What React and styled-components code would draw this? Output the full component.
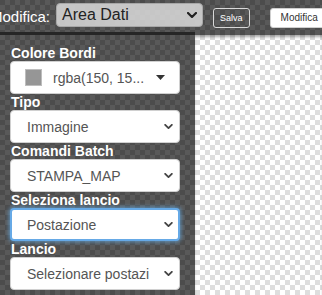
import React from "react";
import styled, { createGlobalStyle, css } from "styled-components";

const Global = createGlobalStyle`
  html, body { margin: 0; padding: 0; }
  body { font-family: "Liberation Sans", Arial, sans-serif; }
`;

const checker = (a, b) => css`
  background-color: ${a};
  background-image:
    linear-gradient(45deg, ${b} 25%, transparent 25%, transparent 75%, ${b} 75%),
    linear-gradient(45deg, ${b} 25%, transparent 25%, transparent 75%, ${b} 75%);
  background-size: 10px 10px;
  background-position: 0 0, 5px 5px;
`;

const Page = styled.div`
  width: 322px;
  height: 295px;
  overflow: hidden;
  display: flex;
  flex-direction: column;
  ${checker("#4c4c4c", "#595959")}
`;

const TopBar = styled.div`
  height: 32px;
  flex: none;
  display: flex;
  align-items: center;
  margin-left: -10px;
  white-space: nowrap;
  & > * { flex: none; }
`;

const BarLabel = styled.span`
  color: #fff;
  font-size: 15px;
  margin-right: 6px;
`;

const AreaSelect = styled.div`
  width: 147px;
  height: 24px;
  box-sizing: border-box;
  margin-top: -2px;
  display: flex;
  align-items: center;
  justify-content: space-between;
  padding: 0 5px 0 5px;
  background: rgba(215, 215, 215, 0.88);
  border: 1px solid #a8a8a8;
  border-radius: 4px;
  color: #222;
  font-size: 16px;
`;

const Btn = styled.div`
  height: 20px;
  box-sizing: border-box;
  margin-left: ${(p) => p.$ml}px;
  padding: 0 ${(p) => p.$px}px;
  display: flex;
  align-items: center;
  font-size: ${(p) => p.$fs}px;
  border-radius: 3px;
  border: 1px solid ${(p) => (p.$light ? "#cfcfcf" : "#d8d8d8")};
  background: ${(p) => (p.$light ? "#fff" : "transparent")};
  color: ${(p) => (p.$light ? "#333" : "#fff")};
  margin-top: 3px;
`;

const Body = styled.div`
  flex: 1;
  display: flex;
  min-height: 0;
`;

const Sidebar = styled.div`
  width: 195px;
  flex: none;
  border-top: 3px solid #262626;
  padding: 10px 0 0 10px;
  box-sizing: border-box;
`;

const Canvas = styled.div`
  flex: 1;
  margin-top: 3px;
  ${checker("#ffffff", "#dedede")}
  box-shadow: inset 0 3px 3px -1px rgba(0, 0, 0, 0.35);
`;

const Label = styled.div`
  color: #fff;
  font-weight: bold;
  font-size: 14px;
  line-height: 16px;
  padding-left: 1px;
`;

const Field = styled.div`
  width: 170px;
  height: 33px;
  box-sizing: border-box;
  background: #fff;
  border-radius: 4px;
  border: ${(p) => (p.$focus ? "2px solid #66a9e6" : "1px solid #d0d0d0")};
  box-shadow: ${(p) => (p.$focus ? "0 0 4px 1px rgba(102, 175, 233, 0.7)" : "none")};
  display: flex;
  align-items: center;
  padding: 0 ${(p) => (p.$focus ? 5 : 6)}px 0 ${(p) => (p.$focus ? 15 : 16)}px;
  color: #555;
  font-size: 14px;
  white-space: nowrap;
  overflow: hidden;
`;

const FieldText = styled.span`
  flex: 1;
  overflow: hidden;
`;

const Swatch = styled.span`
  width: 17px;
  height: 17px;
  box-sizing: border-box;
  background: rgb(150, 150, 150);
  border: 1px solid #bdbdbd;
  margin: 0 11px 0 -2px;
  flex: none;
`;

const Chevron = ({ size = 9, color = "#444" }) => (
  <svg width={size} height={Math.round(size * 0.6)} viewBox="0 0 10 6" style={{ flex: "none" }}>
    <path d="M1 1 L5 5 L9 1" fill="none" stroke={color} strokeWidth="2.2" strokeLinecap="round" strokeLinejoin="round" />
  </svg>
);

const Caret = () => (
  <svg width="9" height="5" viewBox="0 0 9 5" style={{ flex: "none", marginRight: 8 }}>
    <path d="M0 0 L9 0 L4.5 5 Z" fill="#333" />
  </svg>
);

const groups = [
  { label: "Tipo", value: "Immagine" },
  { label: "Comandi Batch", value: "STAMPA_MAP" },
  { label: "Seleziona lancio", value: "Postazione", focus: true },
  { label: "Lancio", value: "Selezionare postazi" },
];

export default function App() {
  return (
    <Page>
      <Global />
      <TopBar>
        <BarLabel>Modifica:</BarLabel>
        <AreaSelect>
          <span>Area Dati</span>
          <Chevron size={10} color="#222" />
        </AreaSelect>
        <Btn $ml={10} $px={6} $fs={9}>Salva</Btn>
        <Btn $ml={20} $px={10} $fs={10} $light>Modifica</Btn>
      </TopBar>
      <Body>
        <Sidebar>
          <Label>Colore Bordi</Label>
          <Field>
            <Swatch />
            <FieldText>rgba(150, 15...</FieldText>
            <Caret />
          </Field>
          {groups.map((g) => (
            <React.Fragment key={g.label}>
              <Label>{g.label}</Label>
              <Field $focus={g.focus}>
                <FieldText>{g.value}</FieldText>
                <Chevron />
              </Field>
            </React.Fragment>
          ))}
        </Sidebar>
        <Canvas />
      </Body>
    </Page>
  );
}
